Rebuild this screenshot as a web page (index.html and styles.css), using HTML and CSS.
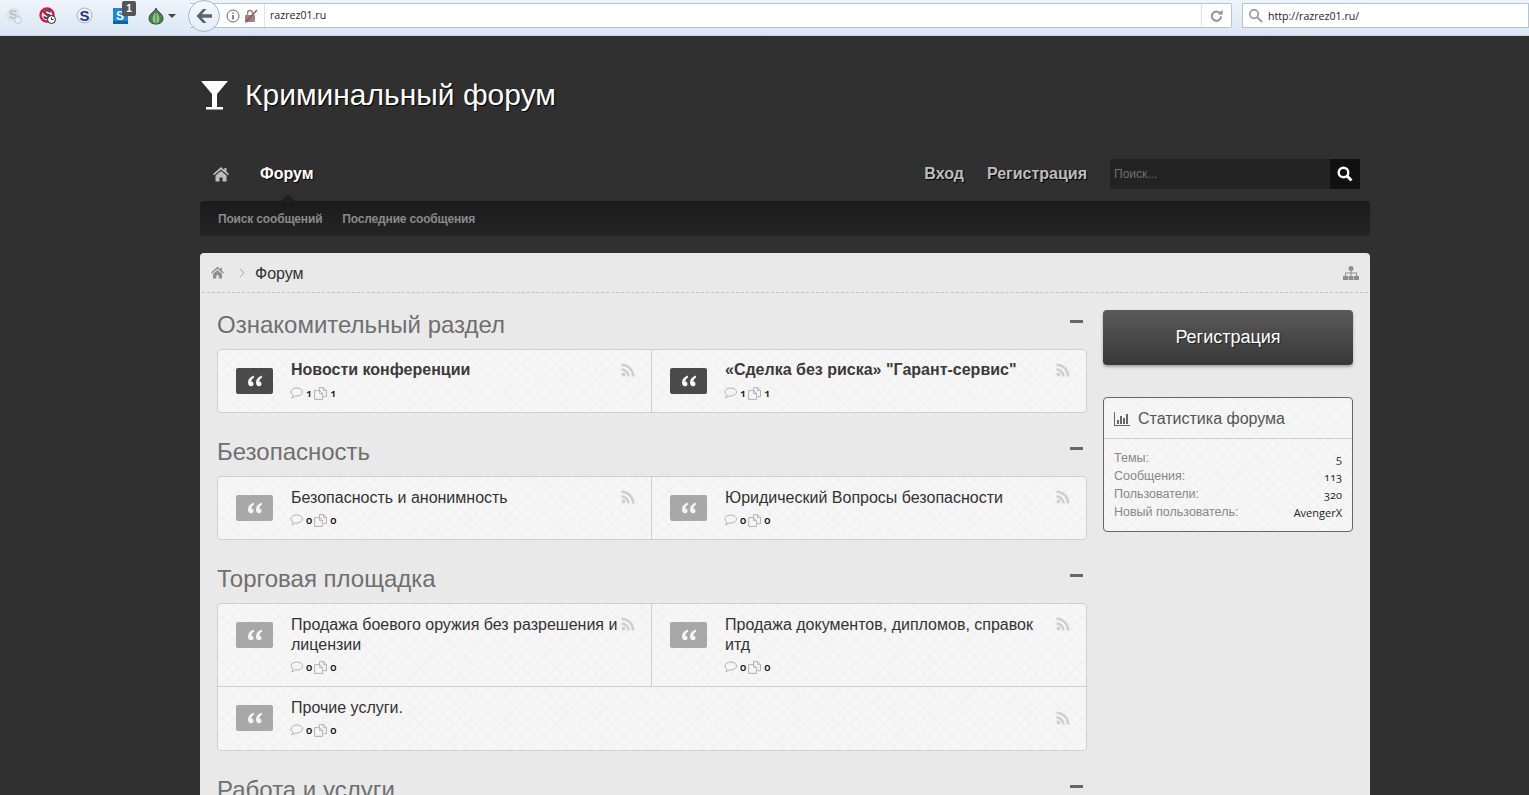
FILE: index.html
```html
<!DOCTYPE html>
<html lang="ru">
<head>
  <meta charset="UTF-8">
  <meta name="viewport" content="width=device-width, initial-scale=1.0">
  <title>Криминальный форум</title>
  <link rel="stylesheet" href="styles.css">
</head>
<body>
  <svg class="defs" width="0" height="0">
    <symbol id="i-home" viewBox="0 0 18 16"><path d="M9 1 1 8l1 1.300L9 3.500l7 5.800L17 8l-2.500-2.200V2h-2.200v1.900z"/><path d="M9 5 3.500 9.500V15.500h4v-4h3v4h4V9.500z"/></symbol>
    <symbol id="i-rss" viewBox="0 0 14 14"><circle cx="2.500" cy="11.500" r="2"/><path d="M.5 5.200v2.500a5.800 5.800 0 0 1 5.800 5.800h2.500A8.300 8.300 0 0 0 .5 5.200z"/><path d="M.5.500V3A10.500 10.500 0 0 1 11 13.500h2.500A13 13 0 0 0 .5.500z"/></symbol>
    <symbol id="i-bubble" viewBox="0 0 13 12"><path d="M6.800 1C3.500 1 1 2.800 1 5c0 1.200.8 2.300 2 3 0 1-.6 2-1.300 2.700 1.400-.1 2.600-.7 3.500-1.800.5.100 1 .1 1.600.100 3.200 0 5.700-1.800 5.700-4S10 1 6.800 1z" fill="none" stroke="#aaa" stroke-width=".9"/></symbol>
    <symbol id="i-copy" viewBox="0 0 13 13"><path d="M5.500.6h4l3 3v6h-3" fill="none" stroke="#aaa" stroke-width=".9"/><path d="M5.500.6v3M9.500.6v3h3" fill="none" stroke="#aaa" stroke-width=".8"/><path d="M.6 3.600h5l3 3v5.800h-8z" fill="none" stroke="#aaa" stroke-width=".9"/><path d="M5.600 3.600v3h3" fill="none" stroke="#aaa" stroke-width=".8"/></symbol>
    <symbol id="i-quote" viewBox="0 0 16 12"><path d="M6.700.5C3.200 1.800 1 4.100 1 7.300 1 9.700 2.200 11.300 4 11.300c1.400 0 2.500-1 2.500-2.400 0-1.300-.9-2.300-2.200-2.400C4.500 5 5.500 3.600 7.200 2.600zM14.700.5c-3.500 1.300-5.700 3.600-5.700 6.800 0 2.400 1.200 4 3 4 1.400 0 2.500-1 2.500-2.400 0-1.300-.9-2.300-2.200-2.400.2-1.500 1.200-2.900 2.900-3.900z"/></symbol>
  </svg>

  <div class="browser">
    <div class="addons">
      <svg class="addon addon-s1" viewBox="0 0 18 18"><circle cx="8" cy="8" r="7" fill="#dfe5ea"/><text x="8" y="12" class="addon-letter" fill="#b9c0c6">S</text><circle cx="13" cy="13" r="3.500" fill="#e8edf2" stroke="#c3c9cf"/></svg>
      <svg class="addon addon-s2" viewBox="0 0 18 18"><circle cx="8" cy="8" r="6.500" fill="#f0e8ee" stroke="#c8203a" stroke-width="2.400"/><text x="8" y="12" class="addon-letter" fill="#1c2f7c">S</text><path d="M3.500 3.500l9 9" stroke="#c8203a" stroke-width="2"/><circle cx="12.500" cy="12.500" r="4" fill="#fff" stroke="#222"/><path d="M12.500 10.500v2h2" stroke="#222" fill="none"/></svg>
      <svg class="addon addon-s3" viewBox="0 0 18 18"><circle cx="8.500" cy="8.500" r="7.500" fill="#eef1f7" stroke="#9aa0ad" stroke-width=".8"/><text x="8.500" y="13.500" class="addon-letter big" fill="#1c3a8c">S</text></svg>
      <div class="addon-count">
        <svg class="addon" viewBox="0 0 18 18"><rect x="1" y="1" width="15" height="16" fill="#1c86d8"/><path d="M1 14h15v3H1z" fill="#0f62a8"/><text x="8" y="13" class="addon-letter small" fill="#fff">S</text></svg>
        <span class="badge">1</span>
      </div>
      <svg class="addon addon-onion" viewBox="0 0 18 18"><path d="M9 1C8.500 4 2 6.500 2 11.500 2 15 5 17 9 17s7-2 7-5.500C16 6.500 9.500 4 9 1z" fill="#3f8c45" stroke="#333" stroke-width=".9"/><path d="M9 2C7.500 6 5 8.500 5 12s2 4.800 4 4.800 4-1.300 4-4.800S10.500 6 9 2z" fill="#8fc488" stroke="#2f5f34" stroke-width=".7"/><path d="M9 2v14.800" stroke="#2f5f34" stroke-width=".7"/><path d="M9 1C8.700 3 7 4.500 6 6h6C11 4.500 9.300 3 9 1z" fill="#6b6b6b"/></svg>
      <span class="caret"></span>
    </div>
    <div class="urlbar">
      <div class="back">
        <svg viewBox="0 0 18 16" width="18" height="16"><path d="M8 1 1.500 8 8 15h3.500L6.800 9.700H17V6.300H6.800L11.500 1z" fill="#5c6670"/></svg>
      </div>
      <svg class="url-icon" viewBox="0 0 14 14" width="14" height="14"><circle cx="7" cy="7" r="6" fill="#fff" stroke="#666"/><path d="M7 6v4.500M7 3.500v1.300" stroke="#555" stroke-width="1.400"/></svg>
      <svg class="url-icon" viewBox="0 0 14 14" width="14" height="14"><rect x="1" y="6" width="10" height="7" rx="1" fill="#8a8a8a"/><path d="M3.500 6V4a2.500 2.500 0 0 1 5 0v2" fill="none" stroke="#8a8a8a" stroke-width="1.300"/><path d="M1.500 13.500 13 1" stroke="#c9402f" stroke-width="1.400"/></svg>
      <span class="url-text">razrez01.ru</span>
      <span class="reload">
        <svg viewBox="0 0 14 14" width="13" height="13"><path d="M11.500 5.500A5 5 0 1 0 12 8" fill="none" stroke="#8b8f94" stroke-width="2"/><path d="M8.500 5.800h5v-5z" fill="#8b8f94"/></svg>
      </span>
    </div>
    <div class="searchbar">
      <svg viewBox="0 0 16 16" width="15" height="15"><circle cx="6.500" cy="6.500" r="4.500" fill="none" stroke="#9a9a9a" stroke-width="1.800"/><path d="M10 10l5 5" stroke="#9a9a9a" stroke-width="2.200"/></svg>
      <span class="url-text">http://razrez01.ru/</span>
    </div>
  </div>

  <div class="site">
    <header class="logo">
      <svg class="logo-icon" viewBox="0 0 29 30" width="29" height="30"><path d="M1 1h27L17 14v13h6v2.500H6V27h6V14z" fill="#fff"/></svg>
      <span class="logo-title">Криминальный форум</span>
    </header>

    <nav class="nav">
      <div class="nav-left">
        <a class="nav-home"><svg width="18" height="16" fill="#bdbdbd"><use href="#i-home"/></svg></a>
        <a class="nav-item active">Форум</a>
      </div>
      <div class="nav-right">
        <a class="nav-item">Вход</a>
        <a class="nav-item">Регистрация</a>
        <div class="nav-search">
          <span class="nav-search-input">Поиск...</span>
          <span class="nav-search-btn"><svg viewBox="0 0 16 16" width="16" height="16"><circle cx="6.500" cy="6.500" r="4.800" fill="none" stroke="#fff" stroke-width="2.400"/><path d="M10 10l4.500 4.500" stroke="#fff" stroke-width="3"/></svg></span>
        </div>
      </div>
    </nav>
    <div class="subnav">
      <a>Поиск сообщений</a>
      <a>Последние сообщения</a>
    </div>

    <div class="panel">
      <div class="crumbs">
        <svg width="15" height="13" fill="#8f8f8f"><use href="#i-home"/></svg>
        <svg class="crumb-sep" viewBox="0 0 6 10" width="6" height="10"><path d="M1 1l4 4-4 4" fill="none" stroke="#aaa"/></svg>
        <span class="crumb-text">Форум</span>
        <svg class="crumb-map" viewBox="0 0 16 14" width="16" height="14" fill="#8f8f8f"><circle cx="8" cy="2.500" r="2.500"/><path d="M0 10h5v4H0zM5.500 10h5v4h-5zM11 10h5v4h-5z"/><path d="M7.500 4h1v2.500h5.500V10h-1V7.500H8.500V10h-1V7.500H3V10H2V6.500h5.500z"/></svg>
      </div>

      <div class="layout">
        <main class="main">
          <section class="category">
            <div class="cat-head"><h2>Ознакомительный раздел</h2><span class="minus"></span></div>
            <div class="board-grid">
              <div class="board unread">
                <span class="board-icon"><svg width="16" height="12"><use href="#i-quote"/></svg></span>
                <div class="board-body">
                  <a class="board-title">Новости конференции</a>
                  <div class="board-stats"><svg width="13" height="12"><use href="#i-bubble"/></svg><b>1</b><svg width="13" height="13"><use href="#i-copy"/></svg><b>1</b></div>
                </div>
                <svg class="board-rss" width="14" height="14"><use href="#i-rss"/></svg>
              </div>
              <div class="board unread">
                <span class="board-icon"><svg width="16" height="12"><use href="#i-quote"/></svg></span>
                <div class="board-body">
                  <a class="board-title">«Сделка без риска» "Гарант-сервис"</a>
                  <div class="board-stats"><svg width="13" height="12"><use href="#i-bubble"/></svg><b>1</b><svg width="13" height="13"><use href="#i-copy"/></svg><b>1</b></div>
                </div>
                <svg class="board-rss" width="14" height="14"><use href="#i-rss"/></svg>
              </div>
            </div>
          </section>

          <section class="category">
            <div class="cat-head"><h2>Безопасность</h2><span class="minus"></span></div>
            <div class="board-grid">
              <div class="board">
                <span class="board-icon"><svg width="16" height="12"><use href="#i-quote"/></svg></span>
                <div class="board-body">
                  <a class="board-title">Безопасность и анонимность</a>
                  <div class="board-stats"><svg width="13" height="12"><use href="#i-bubble"/></svg><b>0</b><svg width="13" height="13"><use href="#i-copy"/></svg><b>0</b></div>
                </div>
                <svg class="board-rss" width="14" height="14"><use href="#i-rss"/></svg>
              </div>
              <div class="board">
                <span class="board-icon"><svg width="16" height="12"><use href="#i-quote"/></svg></span>
                <div class="board-body">
                  <a class="board-title">Юридический Вопросы безопасности</a>
                  <div class="board-stats"><svg width="13" height="12"><use href="#i-bubble"/></svg><b>0</b><svg width="13" height="13"><use href="#i-copy"/></svg><b>0</b></div>
                </div>
                <svg class="board-rss" width="14" height="14"><use href="#i-rss"/></svg>
              </div>
            </div>
          </section>

          <section class="category">
            <div class="cat-head"><h2>Торговая площадка</h2><span class="minus"></span></div>
            <div class="board-grid">
              <div class="board">
                <span class="board-icon"><svg width="16" height="12"><use href="#i-quote"/></svg></span>
                <div class="board-body">
                  <a class="board-title">Продажа боевого оружия без разрешения и лицензии</a>
                  <div class="board-stats"><svg width="13" height="12"><use href="#i-bubble"/></svg><b>0</b><svg width="13" height="13"><use href="#i-copy"/></svg><b>0</b></div>
                </div>
                <svg class="board-rss" width="14" height="14"><use href="#i-rss"/></svg>
              </div>
              <div class="board">
                <span class="board-icon"><svg width="16" height="12"><use href="#i-quote"/></svg></span>
                <div class="board-body">
                  <a class="board-title">Продажа документов, дипломов, справок итд</a>
                  <div class="board-stats"><svg width="13" height="12"><use href="#i-bubble"/></svg><b>0</b><svg width="13" height="13"><use href="#i-copy"/></svg><b>0</b></div>
                </div>
                <svg class="board-rss" width="14" height="14"><use href="#i-rss"/></svg>
              </div>
              <div class="board wide">
                <span class="board-icon"><svg width="16" height="12"><use href="#i-quote"/></svg></span>
                <div class="board-body">
                  <a class="board-title">Прочие услуги.</a>
                  <div class="board-stats"><svg width="13" height="12"><use href="#i-bubble"/></svg><b>0</b><svg width="13" height="13"><use href="#i-copy"/></svg><b>0</b></div>
                </div>
                <svg class="board-rss" width="14" height="14"><use href="#i-rss"/></svg>
              </div>
            </div>
          </section>

          <section class="category">
            <div class="cat-head"><h2>Работа и услуги</h2><span class="minus"></span></div>
          </section>
        </main>

        <aside class="side">
          <a class="reg-btn">Регистрация</a>
          <div class="stats">
            <h3>
              <svg viewBox="0 0 16 14" width="16" height="14" fill="#666"><path d="M0 0h1v13h15v1H0z"/><path d="M3 8h2v4H3zM6 4h2v8H6zM9 6h2v6H9zM12 2h2v10h-2z"/></svg>
              Статистика форума
            </h3>
            <dl class="stats-list">
              <div><dt>Темы:</dt><dd>5</dd></div>
              <div><dt>Сообщения:</dt><dd>113</dd></div>
              <div><dt>Пользователи:</dt><dd>320</dd></div>
              <div><dt>Новый пользователь:</dt><dd>AvengerX</dd></div>
            </dl>
          </div>
        </aside>
      </div>
    </div>
  </div>
</body>
</html>
```

FILE: styles.css
```css
html, body {
  margin: 0;
  padding: 0;
  height: 795px;
  overflow: hidden;
}
body {
  background: #303030;
  font-family: "Liberation Sans", Arial, sans-serif;
  color: #333;
}
.defs {
  position: absolute;
}

/* browser chrome */
.browser {
  height: 35px;
  display: flex;
  align-items: flex-start;
  background: linear-gradient(#eef4fb, #dbe7f4);
  border-bottom: 1px solid #c3d0de;
  overflow: hidden;
}
.addons {
  width: 190px;
  height: 31px;
  display: flex;
  align-items: center;
  flex-shrink: 0;
  padding-left: 5px;
  box-sizing: border-box;
}
.addon {
  width: 18px;
  height: 18px;
  display: block;
}
.addon-letter {
  font: bold 13px "Liberation Sans", sans-serif;
  text-anchor: middle;
}
.addon-letter.small {
  font-size: 12px;
}
.addon-letter.big {
  font-size: 15px;
}
.addon-s2 {
  margin-left: 16px;
}
.addon-s3 {
  margin-left: 19px;
}
.addon-count {
  position: relative;
  margin-left: 18px;
}
.badge {
  position: absolute;
  top: -6px;
  left: 10px;
  width: 14px;
  height: 15px;
  background: #555;
  color: #fff;
  border-radius: 2px;
  font: bold 10px/15px "Liberation Sans", sans-serif;
  text-align: center;
}
.addon-onion {
  margin-left: 17px;
}
.caret {
  margin-left: 3px;
  border-left: 4px solid transparent;
  border-right: 4px solid transparent;
  border-top: 4px solid #444;
}
.urlbar {
  width: 1041px;
  height: 23px;
  margin-top: 3px;
  display: flex;
  align-items: center;
  background: #fff;
  border: 1px solid #b4c4d6;
  border-left: 0;
  border-radius: 0 2px 2px 0;
  flex-shrink: 0;
  gap: 4px;
}
.back {
  width: 30px;
  height: 30px;
  margin: -4px 2px 0 -2px;
  border: 1px solid #aab6c4;
  border-radius: 50%;
  background: linear-gradient(#f6f9fd, #e4ecf6);
  display: flex;
  align-items: center;
  justify-content: center;
  align-self: flex-start;
  flex-shrink: 0;
}
.url-icon {
  flex-shrink: 0;
}
.url-text {
  font: 10.6px "Open Sans", "Noto Sans", sans-serif;
  color: #222;
}
.urlbar .url-text {
  margin-left: 2px;
  padding-left: 5px;
  border-left: 1px solid #dde3ea;
  line-height: 23px;
}
.reload {
  margin-left: auto;
  width: 29px;
  height: 23px;
  display: flex;
  align-items: center;
  justify-content: center;
  border-left: 1px solid #dde3ea;
}
.searchbar {
  flex: 1;
  height: 23px;
  margin: 3px 0 0 10px;
  display: flex;
  align-items: center;
  gap: 5px;
  padding-left: 5px;
  background: #fff;
  border: 1px solid #b4c4d6;
}

/* site */
.site {
  width: 1170px;
  margin-left: 200px;
}
.logo {
  height: 118px;
  display: flex;
  align-items: center;
  gap: 16px;
}
.logo-title {
  font-size: 30px;
  color: #fff;
  text-shadow: 1px 1px 1px #000;
}
.nav {
  height: 39px;
  padding-bottom: 8px;
  display: flex;
  justify-content: space-between;
  align-items: center;
}
.nav-left, .nav-right {
  display: flex;
  align-items: center;
}
.nav-home {
  display: flex;
  margin-left: 12px;
  margin-right: 30px;
}
.nav-item {
  font-size: 16px;
  font-weight: bold;
  color: #bdbdbd;
  text-shadow: 1px 1px 1px #000;
  position: relative;
}
.nav-item.active {
  color: #fff;
}
.nav-item.active::after {
  content: "";
  position: absolute;
  left: 20px;
  top: 29px;
  border-left: 8px solid transparent;
  border-right: 8px solid transparent;
  border-bottom: 8px solid #1f1f1f;
}
.nav-right .nav-item {
  margin-right: 23px;
}
.nav-search {
  width: 250px;
  height: 30px;
  display: flex;
  margin-right: 10px;
  border-radius: 2px;
  overflow: hidden;
  background: #232323;
}
.nav-search-input {
  flex: 1;
  padding-left: 4px;
  font-size: 12px;
  line-height: 30px;
  color: #6f6f6f;
}
.nav-search-btn {
  width: 30px;
  background: #111;
  display: flex;
  align-items: center;
  justify-content: center;
}
.subnav {
  height: 35px;
  display: flex;
  align-items: center;
  gap: 20px;
  padding-left: 18px;
  background: linear-gradient(#1b1b1b, #242424);
  border-radius: 4px;
  font-size: 12px;
  font-weight: bold;
  letter-spacing: -.17px;
  color: #8a8a8a;
}
.panel {
  margin-top: 17px;
  background: #e9e9e9;
  border-radius: 4px 4px 0 0;
  height: 560px;
  overflow: hidden;
}
.crumbs {
  height: 39px;
  margin: 0 2px;
  padding: 0 9px 0 8px;
  display: flex;
  align-items: center;
  gap: 7px;
  border-bottom: 1px dashed #c2c2c2;
}
.crumb-sep {
  margin-left: 7px;
}
.crumb-text {
  margin-left: 3px;
  padding-top: 2px;
  font-size: 16px;
  color: #333;
}
.crumb-map {
  margin-left: auto;
}
.layout {
  display: flex;
  gap: 16px;
  padding: 0 17px;
}
.main {
  width: 870px;
}
.side {
  width: 250px;
  padding-top: 17px;
}
.category {
  margin-bottom: 22px;
}
.category:first-child {
  padding-top: 15px;
}
.cat-head {
  height: 41px;
  display: flex;
  align-items: center;
  justify-content: space-between;
}
.cat-head h2 {
  margin: 0;
  font-size: 24px;
  font-weight: normal;
  color: #6f6f6f;
  position: relative;
  top: -4px;
}
.minus {
  width: 13px;
  height: 3px;
  margin-right: 4px;
  background: #666;
  position: relative;
  top: -7px;
}

/* boards */
.board-grid {
  display: grid;
  grid-template-columns: 1fr 1fr;
  border: 1px solid #cfcfcf;
  border-radius: 4px;
  overflow: hidden;
  background-color: #f6f6f6;
  background-image:
    repeating-linear-gradient(45deg, rgba(0,0,0,.012) 0 2px, transparent 2px 8px),
    repeating-linear-gradient(-45deg, rgba(0,0,0,.012) 0 2px, transparent 2px 8px);
}
.board {
  min-height: 62px;
  display: flex;
  padding: 10px 15px 13px 18px;
  box-sizing: border-box;
  position: relative;
  border-right: 1px solid #cfcfcf;
}
.board:nth-child(2n) {
  border-right: 0;
}
.board.wide {
  grid-column: 1 / 3;
  border-right: 0;
  border-top: 1px solid #cfcfcf;
  padding-bottom: 14px;
}
.board-icon {
  width: 37px;
  height: 26px;
  margin-top: 8px;
  flex-shrink: 0;
  display: flex;
  align-items: center;
  justify-content: center;
  background: #a8a8a8;
  border-radius: 2px;
  fill: #f4f4f4;
}
.unread .board-icon {
  background: #4a4a4a;
}
.board-body {
  margin-left: 18px;
  flex: 1;
  padding-right: 16px;
}
.board-title {
  display: block;
  padding-top: 1px;
  font-size: 16px;
  line-height: 20px;
  color: #333;
}
.unread .board-title {
  padding-top: 0;
  font-weight: bold;
  color: #3a3a3a;
}
.board-stats {
  margin: 5px 0 0 -1px;
  display: flex;
  align-items: center;
  height: 14px;
}
.board:not(.unread) .board-stats {
  margin-top: 4px;
}
.board-stats svg {
  position: relative;
  top: 1px;
}
.board-stats b {
  font: 600 11px "Open Sans", sans-serif;
  font-variant-numeric: oldstyle-nums;
  color: #111;
  margin: 0 2px 0 3px;
}
.board-rss {
  fill: #cfcfcf;
  position: absolute;
  right: 16px;
  top: 13px;
}
.board.wide .board-rss {
  top: 24px;
}

/* sidebar */
.reg-btn {
  display: block;
  height: 55px;
  line-height: 55px;
  text-align: center;
  font-size: 18px;
  color: #fff;
  background: linear-gradient(#5a5a5a, #383838);
  border-radius: 4px;
  box-shadow: 0 2px 3px rgba(0,0,0,.3);
  text-shadow: 1px 1px 1px #222;
}
.stats {
  margin-top: 32px;
  border: 1px solid #666;
  border-radius: 4px;
  background-color: #f6f6f6;
  background-image:
    repeating-linear-gradient(45deg, rgba(0,0,0,.012) 0 2px, transparent 2px 8px),
    repeating-linear-gradient(-45deg, rgba(0,0,0,.012) 0 2px, transparent 2px 8px);
}
.stats h3 {
  margin: 0;
  height: 38px;
  padding: 2px 0 0 10px;
  display: flex;
  align-items: center;
  gap: 8px;
  font-size: 16px;
  font-weight: normal;
  color: #555;
  border-bottom: 1px solid #cfcfcf;
}
.stats-list {
  margin: 0;
  padding: 10px;
}
.stats-list div {
  height: 18px;
  display: flex;
  justify-content: space-between;
  align-items: center;
}
.stats-list dt {
  font-size: 12.5px;
  color: #888;
}
.stats-list dd {
  margin: 0;
  font: 11px "Open Sans", sans-serif;
  font-variant-numeric: oldstyle-nums;
  color: #222;
}
```
